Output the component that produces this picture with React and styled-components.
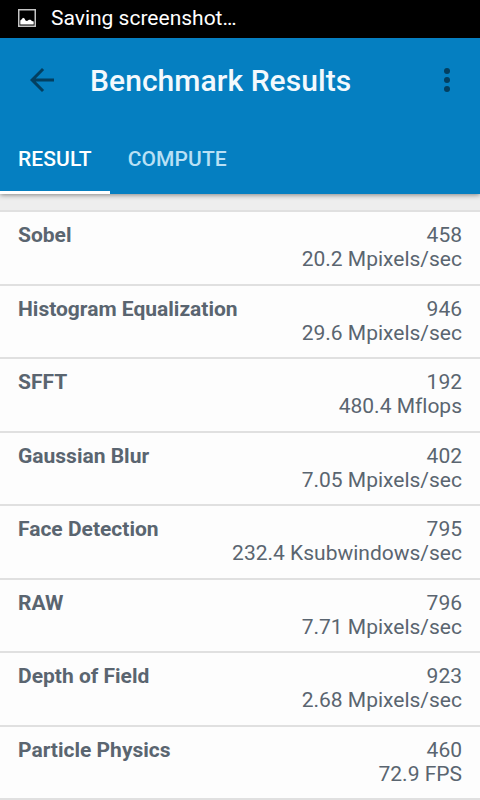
import React, { Component } from 'react';
import styled, { createGlobalStyle } from 'styled-components';

const colors = {
  primary: '#057fc1',
  icon: '#033f60',
  text: '#5a6570',
  divider: '#e0e0e0',
  page: '#eeeeee',
  card: '#fdfdfd'
};
const margin = '18px';

const results = [
  { name: 'Sobel', score: '458', rate: '20.2 Mpixels/sec' },
  { name: 'Histogram Equalization', score: '946', rate: '29.6 Mpixels/sec' },
  { name: 'SFFT', score: '192', rate: '480.4 Mflops' },
  { name: 'Gaussian Blur', score: '402', rate: '7.05 Mpixels/sec' },
  { name: 'Face Detection', score: '795', rate: '232.4 Ksubwindows/sec' },
  { name: 'RAW', score: '796', rate: '7.71 Mpixels/sec' },
  { name: 'Depth of Field', score: '923', rate: '2.68 Mpixels/sec' },
  { name: 'Particle Physics', score: '460', rate: '72.9 FPS' }
];

const GlobalStyle = createGlobalStyle`
  * {
    box-sizing: border-box;
  }
  body {
    margin: 0;
    overflow: hidden;
    background: ${colors.page};
    font-family: Roboto, 'Liberation Sans', sans-serif;
    font-variant-ligatures: none;
  }
`;

const Screen = styled.div`
  display: flex;
  flex-direction: column;
  height: 800px;
  overflow: hidden;
`;

const StatusBar = styled.div`
  display: flex;
  flex: none;
  align-items: center;
  height: 38px;
  padding: 0 ${margin} 2px;
  background: black;
  color: white;
  font-size: 21px;
`;

const StatusIcon = styled.svg`
  width: 18px;
  height: 18px;
  margin-right: 15px;
`;

const Header = styled.header`
  position: relative;
  flex: none;
  height: 156px;
  background: ${colors.primary};
  box-shadow: 0 1px 5px rgba(0, 0, 0, 0.45);
`;

const Toolbar = styled.div`
  display: flex;
  align-items: center;
  height: 84px;
  padding: 0 15px 0 24px;
`;

const ToolbarButton = styled.button`
  display: flex;
  padding: 0;
  border: 0;
  background: none;
  color: ${colors.icon};
  cursor: pointer;
`;

const Title = styled.h1`
  flex: 1;
  margin: 0 0 0 30px;
  padding-top: 2px;
  color: #f3f9fd;
  font-size: 30px;
  font-weight: 500;
  letter-spacing: 0.06px;
  line-height: 36px;
`;

const Tabs = styled.div`
  display: flex;
  height: 72px;
`;

const Tab = styled.button`
  height: 72px;
  padding: 5px ${margin} 0;
  border: 0;
  border-bottom: 3px solid ${({ $active }) => ($active ? 'white' : 'transparent')};
  background: none;
  color: ${({ $active }) => ($active ? 'white' : '#b9e0f5')};
  font-family: inherit;
  font-size: 21px;
  font-weight: 500;
  letter-spacing: 0.1px;
  cursor: pointer;
`;

const ResultList = styled.ul`
  flex: none;
  margin: 16px 0 0;
  padding: 0;
  list-style: none;
`;

const ResultRow = styled.li`
  display: flex;
  justify-content: space-between;
  height: 73.5px;
  padding: 11px ${margin} 0;
  border-top: 2px solid ${colors.divider};
  background: ${colors.card};
  color: ${colors.text};
  font-size: 21px;
  line-height: 24px;
`;

const ResultName = styled.span`
  font-weight: 700;
`;

const ResultValue = styled.div`
  text-align: right;
`;

const ListEnd = styled.li`
  height: 2px;
  background: ${colors.divider};
`;

class App extends Component {
  state = {
    tab: 'RESULT'
  };
  handleSelectTab = tab => {
    this.setState({ tab });
  };
  render() {
    const tabs = ['RESULT', 'COMPUTE'].map(tab => (
      <Tab
        key={tab}
        $active={tab === this.state.tab}
        onClick={() => this.handleSelectTab(tab)}
      >
        {tab}
      </Tab>
    ));
    const rows = results.map(({ name, score, rate }) => (
      <ResultRow key={name}>
        <ResultName>{name}</ResultName>
        <ResultValue>
          <div>{score}</div>
          <div>{rate}</div>
        </ResultValue>
      </ResultRow>
    ));
    return (
      <Screen>
        <GlobalStyle />
        <StatusBar>
          <StatusIcon viewBox="0 0 18 18">
            <rect x="0.75" y="0.75" width="16.5" height="16.5" fill="none" stroke="#c4c4c4" strokeWidth="1.5" />
            <path d="M2.3 15.5V11.5L3.5 10.5L5 8.7L6.5 9.5L7.5 11.5L9 12L11 10.8L12.5 10.8L14 12L15.7 12.5V15.5Z" fill="white" />
          </StatusIcon>
          Saving screenshot…
        </StatusBar>
        <Header>
          <Toolbar>
            <ToolbarButton aria-label="Back">
              <svg width="36" height="36" viewBox="0 0 24 24" fill="currentColor">
                <path d="M20 11H7.83l5.59-5.59L12 4l-8 8 8 8 1.41-1.41L7.83 13H20v-2z" />
              </svg>
            </ToolbarButton>
            <Title>Benchmark Results</Title>
            <ToolbarButton aria-label="More options">
              <svg width="36" height="36" viewBox="0 0 24 24" fill="currentColor">
                <circle cx="12" cy="6" r="2" />
                <circle cx="12" cy="12" r="2" />
                <circle cx="12" cy="18" r="2" />
              </svg>
            </ToolbarButton>
          </Toolbar>
          <Tabs>{tabs}</Tabs>
        </Header>
        <ResultList>
          {rows}
          <ListEnd />
        </ResultList>
      </Screen>
    );
  }
}

export default App;
